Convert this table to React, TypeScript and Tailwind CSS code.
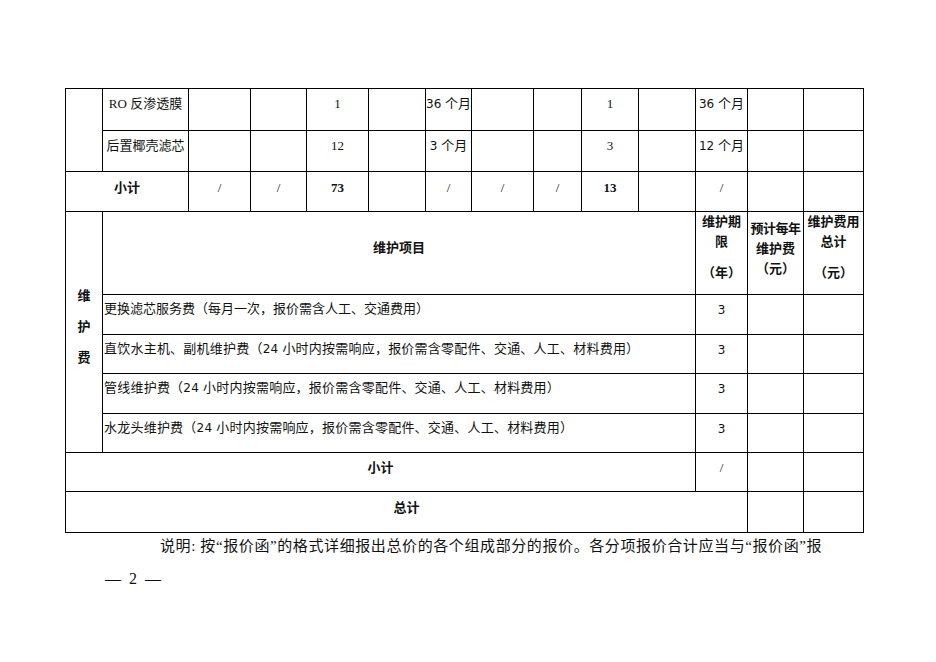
import React from "react";

const font = { fontFamily: '"Liberation Serif", "Noto Sans CJK SC", serif' };
const sans = { fontFamily: '"DejaVu Sans", "Noto Sans CJK SC", sans-serif' };

const widths = [37, 86, 62, 56, 62, 57, 46, 62, 48, 57, 57, 52, 56, 60];

const B = "border border-black";
const C = `${B} align-top text-center pt-[7px] leading-[16px]`;

function S({ children }: { children: React.ReactNode }) {
  return (
    <span className="text-[12px]" style={sans}>
      {children}
    </span>
  );
}

function Month({ n }: { n: string }) {
  return (
    <span className="whitespace-nowrap">
      <S>{n} </S>个月
    </span>
  );
}

type Cell = React.ReactNode;

function Row({ cells }: { cells: Cell[] }) {
  return (
    <>
      {cells.map((c, i) => (
        <td key={i} className={C}>
          {c}
        </td>
      ))}
    </>
  );
}

export default function App() {
  const items: { t: React.ReactNode; wide: boolean }[] = [
    { t: "更换滤芯服务费（每月一次，报价需含人工、交通费用）", wide: false },
    {
      t: (
        <>
          直饮水主机、副机维护费（<S>24 </S>小时内按需响应，报价需含零配件、交通、人工、材料费用）
        </>
      ),
      wide: true,
    },
    {
      t: (
        <>
          管线维护费（<S>24 </S>小时内按需响应，报价需含零配件、交通、人工、材料费用）
        </>
      ),
      wide: true,
    },
    {
      t: (
        <>
          水龙头维护费（<S>24 </S>小时内按需响应，报价需含零配件、交通、人工、材料费用）
        </>
      ),
      wide: true,
    },
  ];
  return (
    <div className="w-[936px] h-[662px] bg-white text-[#111] overflow-hidden" style={font}>
      <div className="pl-[65px] pt-[88px]">
        <table className="table-fixed border-collapse text-[13px] w-[798px]">
          <colgroup>
            {widths.map((w, i) => (
              <col key={i} style={{ width: w }} />
            ))}
          </colgroup>
          <tbody>
            <tr className="h-[42px]">
              <td className={B} rowSpan={2}></td>
              <Row cells={["RO 反渗透膜", "", "", "1", "", <Month n="36" />, "", "", "1", "", <Month n="36" />, "", ""]} />
            </tr>
            <tr className="h-[41px]">
              <Row cells={["后置椰壳滤芯", "", "", "12", "", <Month n="3" />, "", "", "3", "", <Month n="12" />, "", ""]} />
            </tr>
            <tr className="h-[40px]">
              <td className={`${C} font-bold pt-[8px]`} colSpan={2}>
                小计
              </td>
              {["/", "/", "73", "", "/", "/", "/", "13", "", "/", "", ""].map((c, i) => (
                <td key={i} className={`${C} pt-[8px] ${c !== "/" ? "font-bold" : ""}`}>
                  {c}
                </td>
              ))}
            </tr>
            <tr className="h-[83px]">
              <td className={`${B} align-top font-bold text-center pt-[74px]`} rowSpan={5}>
                <div className="flex flex-col items-center gap-[11px] leading-[20px]">
                  <span>维</span>
                  <span>护</span>
                  <span>费</span>
                </div>
              </td>
              <td className={`${B} align-top text-center font-bold pt-[26px] leading-[20px]`} colSpan={10}>
                维护项目
              </td>
              <td className={`${B} align-top text-center font-bold leading-[20px] p-0`}>
                <div>维护期</div>
                <div>限</div>
                <div className="mt-[11px]">（年）</div>
              </td>
              <td className={`${B} align-top text-center font-bold leading-[20px] pt-[7px] px-0`}>
                <div className="whitespace-nowrap tracking-[-0.5px]">预计每年</div>
                <div>维护费</div>
                <div>（元）</div>
              </td>
              <td className={`${B} align-top text-center font-bold leading-[20px] p-0`}>
                <div className="whitespace-nowrap">维护费用</div>
                <div>总计</div>
                <div className="mt-[11px]">（元）</div>
              </td>
            </tr>
            {items.map((it, i) => (
              <tr key={i} className={i % 2 === 0 ? "h-[40px]" : "h-[39px]"}>
                <td
                  className={`${B} align-top text-left pl-[1px] pt-[6px] leading-[16px] whitespace-nowrap ${it.wide ? "tracking-[0.22px]" : ""}`}
                  colSpan={10}
                >
                  {it.t}
                </td>
                <td className={`${C} pt-[6px]`}>
                  <S>3</S>
                </td>
                <td className={B}></td>
                <td className={B}></td>
              </tr>
            ))}
            <tr className="h-[39px]">
              <td className={`${C} font-bold pt-[6px]`} colSpan={11}>
                小计
              </td>
              <td className={`${C} pt-[6px]`}>/</td>
              <td className={B}></td>
              <td className={B}></td>
            </tr>
            <tr className="h-[41px]">
              <td className={`${C} font-bold pt-[8px]`} colSpan={12}>
                总计
              </td>
              <td className={B}></td>
              <td className={B}></td>
            </tr>
          </tbody>
        </table>
        <div className="pl-[95px] pt-[4px] text-[15px] leading-[18px] whitespace-nowrap tracking-[0.6px]">
          说明: 按“报价函”的格式详细报出总价的各个组成部分的报价。各分项报价合计应当与“报价函”报
        </div>
        <div className="pl-[40px] pt-[14px] text-[16px] leading-[20px] whitespace-pre">{"—  2  —"}</div>
      </div>
    </div>
  );
}
